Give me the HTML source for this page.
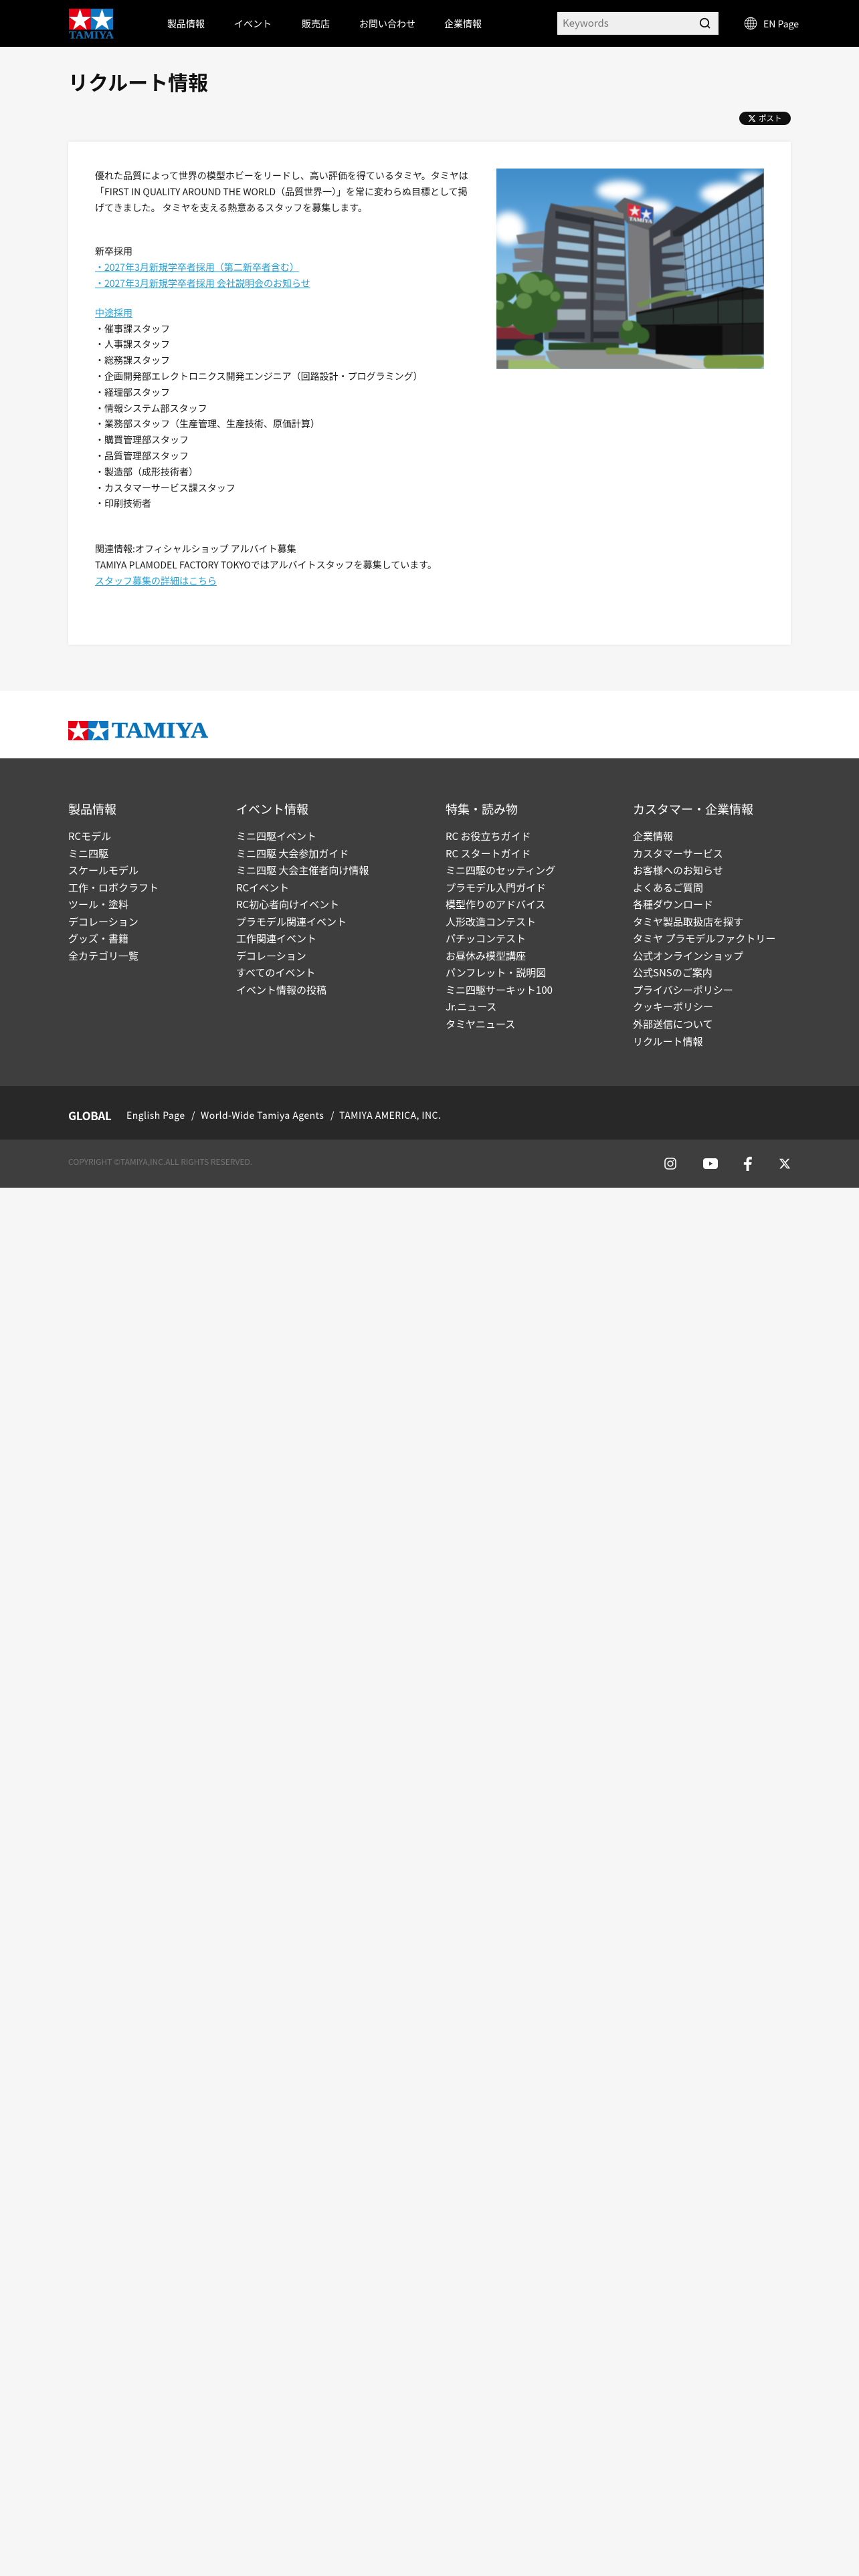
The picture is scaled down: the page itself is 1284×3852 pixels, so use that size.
<!DOCTYPE html>
<html lang="ja">
<head>
<meta charset="utf-8">
<title>リクルート情報</title>
<style>
html,body{margin:0;padding:0;background:#f6f6f6}
body{position:relative;width:1284px;height:3852px;overflow:hidden;font-family:"Noto Sans CJK JP","Liberation Sans",sans-serif;color:#111}
a{color:inherit;text-decoration:none}
.abs,.l,.n,svg.abs{position:absolute}
.n{color:#fff;font-size:14px;line-height:20px;top:26px;white-space:nowrap}
.l{left:142px;font-size:14px;line-height:24px;white-space:nowrap;color:#1a1a1a}
.l a{color:#23a1d8;text-decoration:underline}
.col{position:absolute;top:1198px;color:#fff}
.col h3{margin:0 0 16px;font-size:18px;font-weight:400;line-height:24px;white-space:nowrap}
.col a{display:block;font-size:15px;line-height:25.55px;white-space:nowrap}
.g{position:absolute;top:1655px;font-size:14px;line-height:26px;color:#fff;white-space:nowrap;letter-spacing:.45px}
</style>
</head>
<body>
<div class="abs" style="left:0;top:0;width:1284px;height:70px;background:#000"></div>
<svg class="abs" style="left:0;top:0" width="200" height="70" viewBox="0 0 200 70">
<defs><polygon id="st" points="0,-1 .2245,-.309 .951,-.309 .363,.118 .588,.809 0,.382 -.588,.809 -.363,.118 -.951,-.309 -.2245,-.309"/></defs>
<rect x="103" y="13" width="33" height="31.500" fill="#e60012"/>
<rect x="136" y="13" width="33" height="31.500" fill="#0f76c2"/>
<use href="#st" transform="translate(119.500,30.400) scale(17.400)" fill="#fff"/>
<use href="#st" transform="translate(152.500,30.400) scale(17.400)" fill="#fff"/>
<text x="103" y="57.500" font-family="Liberation Serif,serif" font-weight="700" font-size="16" fill="#146bab" stroke="#146bab" stroke-width=".3" textLength="67" lengthAdjust="spacingAndGlyphs">TAMIYA</text>
</svg>
<a class="n" style="left:250px">製品情報</a>
<a class="n" style="left:350px">イベント</a>
<a class="n" style="left:451px">販売店</a>
<a class="n" style="left:537px">お問い合わせ</a>
<a class="n" style="left:664px">企業情報</a>
<div class="abs" style="left:833px;top:18px;width:241px;height:34px;background:#efefef"></div>
<div class="abs" style="left:841px;top:24px;font-size:15px;line-height:22px;color:#777">Keywords</div>
<svg class="abs" style="left:1044px;top:25px" width="20" height="20" viewBox="0 0 20 20" fill="none" stroke="#111" stroke-width="1.800"><circle cx="9" cy="9" r="6.200"/><path d="M13.500 13.500L17 17"/></svg>
<svg class="abs" style="left:1112px;top:25px" width="20" height="20" viewBox="0 0 20 20" fill="none" stroke="#fff" stroke-width=".9"><circle cx="10" cy="10" r="8.800"/><ellipse cx="10" cy="10" rx="4.300" ry="8.800"/><path d="M10 1.200V18.800M1.200 10H18.800M2.500 5.800H17.500M2.500 14.200H17.500"/></svg>
<div class="n" style="left:1141px;top:26px">EN Page</div>

<div class="abs" style="left:102px;top:100px;font-size:30px;line-height:44px;font-weight:700;color:#111;white-space:nowrap">リクルート情報</div>

<div class="abs" style="left:1105px;top:167px;width:77px;height:20px;border-radius:10px;background:#0f0f0f"></div>
<svg class="abs" style="left:1118px;top:171px" width="12" height="12" viewBox="0 0 24 24"><path fill="#fff" d="M18.244 2.250h3.308l-7.227 8.260 8.502 11.240H16.170l-5.214-6.817L4.990 21.750H1.680l7.730-8.835L1.254 2.250H8.080l4.713 6.231zm-1.161 17.520h1.833L7.084 4.126H5.117z"/></svg>
<div class="abs" style="left:1134px;top:167px;font-size:11.500px;line-height:20px;color:#fff;white-space:nowrap">ポスト</div>

<div class="abs" style="left:102px;top:212px;width:1080px;height:752px;background:#fff;box-shadow:0 0 5px rgba(0,0,0,.08)"></div>

<div class="l" style="top:251px">優れた品質によって世界の模型ホビーをリードし、高い評価を得ているタミヤ。タミヤは</div>
<div class="l" style="top:275px">「FIRST IN QUALITY AROUND THE WORLD（品質世界一）」を常に変わらぬ目標として掲</div>
<div class="l" style="top:299px">げてきました。 タミヤを支える熱意あるスタッフを募集します。</div>
<div class="l" style="top:364px">新卒採用</div>
<div class="l" style="top:388px"><a>・2027年3月新規学卒者採用（第二新卒者含む）</a></div>
<div class="l" style="top:412px"><a>・2027年3月新規学卒者採用 会社説明会のお知らせ</a></div>
<div class="l" style="top:456px"><a>中途採用</a></div>
<div class="l" style="top:480px">・催事課スタッフ</div>
<div class="l" style="top:503px">・人事課スタッフ</div>
<div class="l" style="top:527px">・総務課スタッフ</div>
<div class="l" style="top:551px">・企画開発部エレクトロニクス開発エンジニア（回路設計・プログラミング）</div>
<div class="l" style="top:575px">・経理部スタッフ</div>
<div class="l" style="top:599px">・情報システム部スタッフ</div>
<div class="l" style="top:622px">・業務部スタッフ（生産管理、生産技術、原価計算）</div>
<div class="l" style="top:646px">・購買管理部スタッフ</div>
<div class="l" style="top:670px">・品質管理部スタッフ</div>
<div class="l" style="top:694px">・製造部（成形技術者）</div>
<div class="l" style="top:718px">・カスタマーサービス課スタッフ</div>
<div class="l" style="top:741px">・印刷技術者</div>
<div class="l" style="top:809px">関連情報:オフィシャルショップ アルバイト募集</div>
<div class="l" style="top:833px">TAMIYA PLAMODEL FACTORY TOKYOではアルバイトスタッフを募集しています。</div>
<div class="l" style="top:857px"><a>スタッフ募集の詳細はこちら</a></div>

<svg class="abs" style="left:742px;top:252px" width="400" height="300" viewBox="66 66 1200 900" preserveAspectRatio="none">
<defs>
<linearGradient id="sky" x1="0" y1="0" x2="0" y2="1"><stop offset="0" stop-color="#3e8cc9"/><stop offset=".3" stop-color="#5fa5dc"/><stop offset=".6" stop-color="#9accec"/></linearGradient>
<linearGradient id="glass" x1="0" y1="0" x2="1" y2="1"><stop offset="0" stop-color="#a9cbe4"/><stop offset=".55" stop-color="#86b2d6"/><stop offset="1" stop-color="#6a9cc6"/></linearGradient>
<filter id="b" x="-30%" y="-30%" width="160%" height="160%"><feGaussianBlur stdDeviation="16"/></filter>
<filter id="b2" x="-5%" y="-5%" width="110%" height="110%"><feGaussianBlur stdDeviation="2.500"/></filter>
<clipPath id="c"><rect x="66" y="66" width="1200" height="900"/></clipPath>
</defs>
<g clip-path="url(#c)">
<rect x="66" y="66" width="1200" height="900" fill="url(#sky)"/>
<g fill="#fff" filter="url(#b)">
<ellipse cx="120" cy="335" rx="75" ry="75"/>
<ellipse cx="620" cy="165" rx="105" ry="45"/>
<ellipse cx="770" cy="240" rx="75" ry="35"/>
<ellipse cx="1090" cy="180" rx="110" ry="50"/>
<ellipse cx="1210" cy="110" rx="55" ry="26"/>
</g>
<g filter="url(#b2)">
<!-- stairs -->
<g fill="#7a7e84">
<polygon points="155,365 280,345 280,405 165,405"/>
<polygon points="145,425 275,420 275,490 150,470"/>
<polygon points="138,490 270,480 270,525 140,530"/>
</g>
<!-- tower -->
<polygon points="595,235 640,197 770,240 770,350 660,320 640,295" fill="#5d5f64"/>
<polygon points="655,310 755,345 755,700 660,730" fill="#7a797b"/>
<!-- roof -->
<path d="M385,238 Q520,225 636,268 L636,300 L385,262Z" fill="#85847f"/>
<!-- left building -->
<polygon points="310,222 640,292 660,860 280,835 270,530 285,310" fill="#4c4e54"/>
<polygon points="330,255 640,318 640,345 330,290" fill="#2f3137"/>
<g fill="#9dbfd4">
<polygon points="345,325 480,350 480,375 345,358"/>
<polygon points="525,358 640,378 640,403 525,390"/>
<polygon points="340,392 478,408 478,440 340,425"/>
<polygon points="520,422 640,434 640,460 520,452"/>
<polygon points="333,463 476,478 476,508 333,494"/>
<polygon points="518,488 640,498 640,525 518,518" fill="#8299a8"/>
<polygon points="330,538 474,548 474,578 330,570"/>
<polygon points="515,556 640,566 640,590 515,582" fill="#7f98aa"/>
<polygon points="370,618 470,622 470,650 370,650" fill="#a8b6bf"/>
<polygon points="510,622 640,630 640,660 510,655" fill="#5f6a72"/>
<polygon points="340,698 465,698 465,745 340,745" fill="#a3b0b8"/>
<polygon points="500,702 645,706 645,745 500,745" fill="#6e767d"/>
<polygon points="300,800 462,800 462,830 300,830" fill="#2c2f34"/>
<polygon points="498,798 615,798 615,828 498,828" fill="#2c2f34"/>
<polygon points="505,300 640,322 640,345 505,322" fill="#7d95a6"/>
</g>
<rect x="488" y="285" width="14" height="560" fill="#2f3136"/>
<!-- mid building -->
<polygon points="750,335 872,235 985,265 985,650 760,700" fill="#3e4148"/>
<g fill="#8aa8bf" opacity=".75">
<polygon points="808,420 905,395 910,440 808,445"/>
<polygon points="810,472 908,455 910,500 810,495"/>
<polygon points="812,530 910,515 912,560 812,550"/>
<polygon points="818,585 912,575 914,615 818,610"/>
</g>
<polygon points="770,380 845,340 845,370 770,412" fill="#8d8e90"/>
<!-- glass -->
<polygon points="900,365 1265,150 1265,590 920,640" fill="url(#glass)"/>
<g stroke="#151920" stroke-width="4" fill="none">
<path d="M903,360L925,625M945,338L958,620M983,315L993,615M1022,292L1035,608M1062,268L1082,600M1102,245L1125,595M1147,218L1172,590M1200,188L1225,585M1255,155L1265,583"/>
<path d="M905,415L1265,230M908,475L1265,310M912,520L1265,385M915,570L1265,465M918,610L1265,545"/>
</g>
<polygon points="855,350 1265,85 1265,148 900,368 860,372" fill="#2a2d33"/>
<!-- sign -->
<polygon points="655,222 712,236 712,290 655,278" fill="#d92c3a"/>
<polygon points="712,238 767,250 765,302 712,290" fill="#2155b5"/>
<use href="#st" transform="translate(686,257) scale(25)" fill="#eee"/>
<use href="#st" transform="translate(738,272) scale(25)" fill="#eee"/>
<text x="660" y="298" font-family="Liberation Serif,serif" font-weight="700" font-size="22" fill="#fff" textLength="105" lengthAdjust="spacingAndGlyphs" transform="rotate(7 660 298)">TAMIYA</text>
<!-- canopy -->
<polygon points="692,710 1000,645 1150,595 1265,610 1265,900 1000,905 700,870" fill="#1a1e1e"/>
<polygon points="695,720 1060,660 1265,650 1265,760 695,770" fill="#2c3531"/>
<g stroke="#0b0d0d" stroke-width="5"><path d="M695,770L1265,760M695,715L1060,640L1265,590M860,690V760M1060,640V760M1170,595V900"/></g>
<rect x="780" y="770" width="300" height="135" fill="#0f1111"/>
<path d="M700,680Q860,620 950,625" stroke="#6f8f4f" stroke-width="22" fill="none"/>
<!-- road -->
<polygon points="285,885 560,875 700,900 1130,965 320,965" fill="#8f9090"/>
<polygon points="700,895 900,905 1150,965 950,965" fill="#c9cbc8"/>
<polygon points="120,925 285,925 355,965 118,965" fill="#9cba6b"/>
<rect x="66" y="905" width="220" height="20" fill="#a5a6a2"/>
<rect x="66" y="925" width="54" height="40" fill="#6f706d"/>
<!-- hedges -->
<rect x="300" y="848" width="315" height="32" rx="6" fill="#2a4a26"/>
<rect x="555" y="870" width="150" height="30" rx="12" fill="#75903f"/>
<rect x="995" y="905" width="270" height="58" rx="20" fill="#7c9a45"/>
<!-- trees -->
<rect x="66" y="780" width="210" height="100" fill="#1f2b36"/>
<rect x="66" y="770" width="170" height="60" fill="#a52a35" opacity=".7"/>
<g fill="#35602a">
<circle cx="95" cy="600" r="65"/>
<circle cx="100" cy="720" r="60"/>
<circle cx="245" cy="620" r="92"/>
<circle cx="310" cy="650" r="58"/>
<circle cx="220" cy="720" r="92"/>
<circle cx="280" cy="745" r="58"/>
<circle cx="670" cy="800" r="52"/>
<circle cx="715" cy="815" r="36"/>
</g>
<g fill="#6a9850" opacity=".8">
<circle cx="215" cy="580" r="45"/>
<circle cx="285" cy="600" r="36"/>
<circle cx="330" cy="640" r="22"/>
<circle cx="190" cy="660" r="35"/>
<circle cx="88" cy="560" r="24"/>
<circle cx="80" cy="680" r="20"/>
<circle cx="655" cy="770" r="24"/>
</g>
<ellipse cx="212" cy="870" rx="66" ry="36" fill="#2c5126"/>
</g>
</g>
</svg>

<div class="abs" style="left:0;top:1033px;width:1284px;height:101px;background:#fff"></div>
<svg class="abs" style="left:100px;top:1076px" width="220" height="34" viewBox="100 1076 220 34">
<rect x="102" y="1078" width="30" height="29" fill="#e60012"/>
<rect x="132" y="1078" width="30" height="29" fill="#0f76c2"/>
<use href="#st" transform="translate(117,1094) scale(16)" fill="#fff"/>
<use href="#st" transform="translate(147,1094) scale(16)" fill="#fff"/>
<text x="167" y="1103" font-family="Liberation Serif,serif" font-weight="700" font-size="34" fill="#0a72b8" stroke="#0a72b8" stroke-width=".6" textLength="144" lengthAdjust="spacingAndGlyphs">TAMIYA</text>
</svg>

<div class="abs" style="left:0;top:1134px;width:1284px;height:490px;background:#3e3e3e"></div>
<div class="col" style="left:102px"><h3>製品情報</h3>
<a>RCモデル</a><a>ミニ四駆</a><a>スケールモデル</a><a>工作・ロボクラフト</a><a>ツール・塗料</a><a>デコレーション</a><a>グッズ・書籍</a><a>全カテゴリ一覧</a></div>
<div class="col" style="left:353px"><h3>イベント情報</h3>
<a>ミニ四駆イベント</a><a>ミニ四駆 大会参加ガイド</a><a>ミニ四駆 大会主催者向け情報</a><a>RCイベント</a><a>RC初心者向けイベント</a><a>プラモデル関連イベント</a><a>工作関連イベント</a><a>デコレーション</a><a>すべてのイベント</a><a>イベント情報の投稿</a></div>
<div class="col" style="left:666px"><h3>特集・読み物</h3>
<a>RC お役立ちガイド</a><a>RC スタートガイド</a><a>ミニ四駆のセッティング</a><a>プラモデル入門ガイド</a><a>模型作りのアドバイス</a><a>人形改造コンテスト</a><a>パチッコンテスト</a><a>お昼休み模型講座</a><a>パンフレット・説明図</a><a>ミニ四駆サーキット100</a><a>Jr.ニュース</a><a>タミヤニュース</a></div>
<div class="col" style="left:946px"><h3>カスタマー・企業情報</h3>
<a>企業情報</a><a>カスタマーサービス</a><a>お客様へのお知らせ</a><a>よくあるご質問</a><a>各種ダウンロード</a><a>タミヤ製品取扱店を探す</a><a>タミヤ プラモデルファクトリー</a><a>公式オンラインショップ</a><a>公式SNSのご案内</a><a>プライバシーポリシー</a><a>クッキーポリシー</a><a>外部送信について</a><a>リクルート情報</a></div>

<div class="abs" style="left:0;top:1624px;width:1284px;height:80px;background:#282828"></div>
<div class="abs" style="left:102px;top:1654px;font-size:17px;line-height:28px;font-weight:700;color:#fff;letter-spacing:-.4px">GLOBAL</div>
<div class="g" style="left:189px">English Page</div>
<div class="g" style="left:286px">/</div>
<div class="g" style="left:300px">World-Wide Tamiya Agents</div>
<div class="g" style="left:494px">/</div>
<div class="g" style="left:507px">TAMIYA AMERICA, INC.</div>

<div class="abs" style="left:0;top:1704px;width:1284px;height:72px;background:#3e3e3e"></div>
<div class="abs" style="left:102px;top:1728px;font-size:12px;line-height:20px;color:#757575;white-space:nowrap">COPYRIGHT ©TAMIYA,INC.ALL RIGHTS RESERVED.</div>

<svg class="abs" style="left:993px;top:1731px" width="18" height="18" viewBox="0 0 18 18" fill="none" stroke="#fff" stroke-width="1.600"><rect x="1" y="1" width="16" height="16" rx="4.500"/><circle cx="9" cy="9" r="3.800"/><circle cx="13.500" cy="4.500" r=".9" fill="#fff" stroke="none"/></svg>
<svg class="abs" style="left:1051px;top:1732px" width="22" height="16" viewBox="0 0 22 16"><rect width="22" height="16" rx="4" fill="#fff"/><polygon points="9,5 9,11 14.500,8" fill="#3e3e3e"/></svg>
<svg class="abs" style="left:1111px;top:1729px" width="13" height="22" viewBox="0 0 13 22"><path fill="#fff" d="M8.500 22V12.800h3.500l.6-3.800H8.500V6.700c0-1.200.4-2 2-2h2.300V.9C12.300.8 11.200.7 10 .7 7 .7 4.600 2.600 4.600 6.100V9H.8v3.800h3.800V22z"/></svg>
<svg class="abs" style="left:1164px;top:1731px" width="18" height="18" viewBox="0 0 24 24"><path fill="#fff" d="M18.244 2.250h3.308l-7.227 8.260 8.502 11.240H16.170l-5.214-6.817L4.990 21.750H1.680l7.730-8.835L1.254 2.250H8.080l4.713 6.231zm-1.161 17.520h1.833L7.084 4.126H5.117z"/></svg>
</body>
</html>
